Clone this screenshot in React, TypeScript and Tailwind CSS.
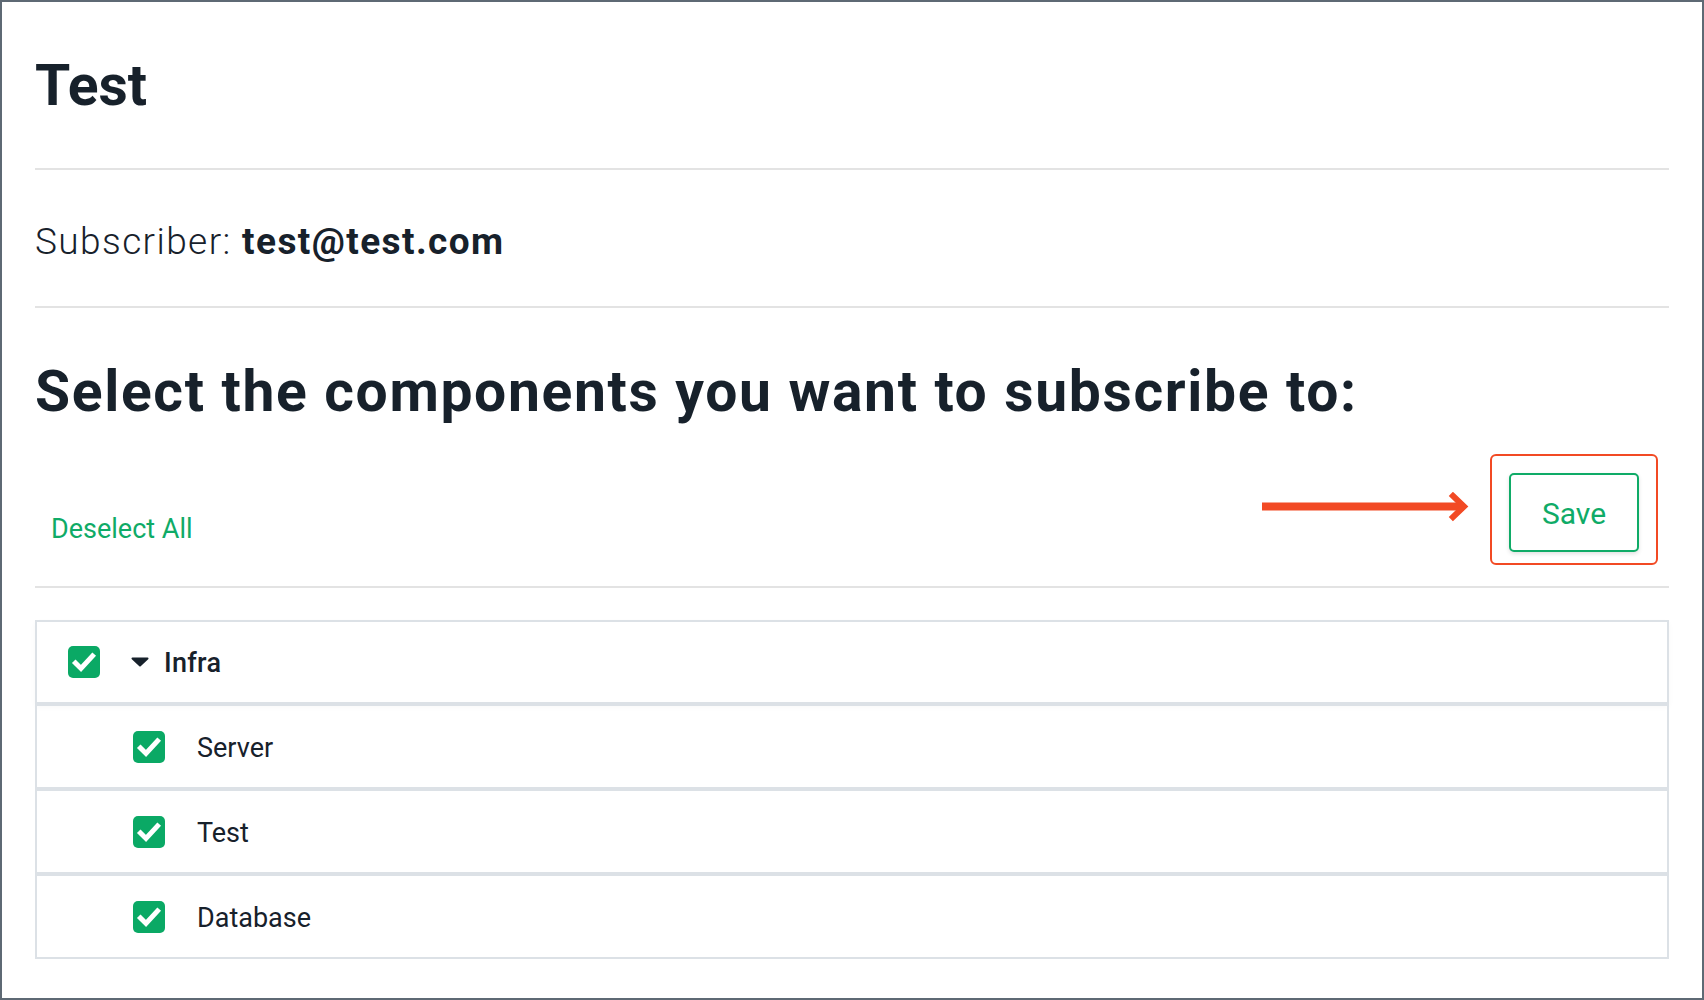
import React from 'react';

const rows = [
  { label: 'Server' },
  { label: 'Test' },
  { label: 'Database' },
];

const CheckBox = () => (
  <span className="block h-[32px] w-[32px] shrink-0 rounded-[5px] bg-[#0aa965]">
    <svg width="32" height="32" viewBox="0 0 32 32" fill="none">
      <polyline points="7.5,17 13,22.5 24.5,10" stroke="#fff" strokeWidth="5" strokeLinecap="square" strokeLinejoin="miter" />
    </svg>
  </span>
);

export default function App() {
  return (
    <div className="h-[1000px] w-[1704px] border-2 border-[#5e6974] bg-white px-[33px] text-[#17212b]" style={{ fontFamily: 'Roboto, "Liberation Sans", sans-serif' }}>
      <h1 className="pt-[55px] text-[57px] font-bold leading-[57px]">Test</h1>
      <div className="mt-[54px] h-[2px] bg-[#e3e3e3]" />

      <p className="mt-[53px] text-[37px] font-light leading-[37px] tracking-[1.4px]">
        Subscriber: <span className="font-bold">test@test.com</span>
      </p>
      <div className="mt-[46px] h-[2px] bg-[#e3e3e3]" />

      <h2 className="mt-[55px] text-[57px] font-bold leading-[57px] tracking-[1.65px]">Select the components you want to subscribe to:</h2>

      <div className="mt-[34px] flex h-[111px] items-start justify-between">
        <button className="ml-[16px] mt-[62px] text-[27px] leading-[27px] text-[#0fab67]">Deselect All</button>
        <div className="mr-[11px] flex items-start">
          <svg className="mt-[38px]" width="207" height="30" viewBox="0 0 207 30" fill="none">
            <line x1="0" y1="14.5" x2="202" y2="14.5" stroke="#f24a24" strokeWidth="8" />
            <polyline points="191,4 202,14.5 191,25" stroke="#f24a24" strokeWidth="6" fill="none" strokeLinecap="square" />
          </svg>
          <div className="ml-[21px] rounded-[6px] border-2 border-[#f24a24] px-[17px] pb-[11px] pt-[17px]">
            <button className="flex h-[79px] w-[130px] items-center justify-center rounded-[5px] border-2 border-[#0fab67] bg-white pt-[2px] text-[30px] text-[#0fab67] shadow-[0_2px_4px_rgba(0,0,0,0.12)]">
              Save
            </button>
          </div>
        </div>
      </div>
      <div className="mt-[21px] h-[2px] bg-[#e3e3e3]" />

      <div className="mt-[32px]">
        <div className="flex h-[84px] items-center border-2 border-[#dce1e6] pl-[31px] shadow-[0_3px_6px_rgba(0,0,0,0.03)]">
          <CheckBox />
          <svg className="ml-[31px]" width="18" height="10" viewBox="0 0 18 10">
            <path d="M1.5 1.5 H16.5 L9 8.5 Z" fill="#17212b" stroke="#17212b" strokeWidth="2" strokeLinejoin="round" />
          </svg>
          <span className="ml-[15px] pt-[2px] text-[27px] font-medium tracking-[0.3px]">Infra</span>
        </div>
        {rows.map((r) => (
          <div key={r.label} className="flex h-[85px] items-center border-2 border-[#dce1e6] pl-[96px]">
            <CheckBox />
            <span className="ml-[32px] pt-[4px] text-[27px]">{r.label}</span>
          </div>
        ))}
      </div>
    </div>
  );
}
